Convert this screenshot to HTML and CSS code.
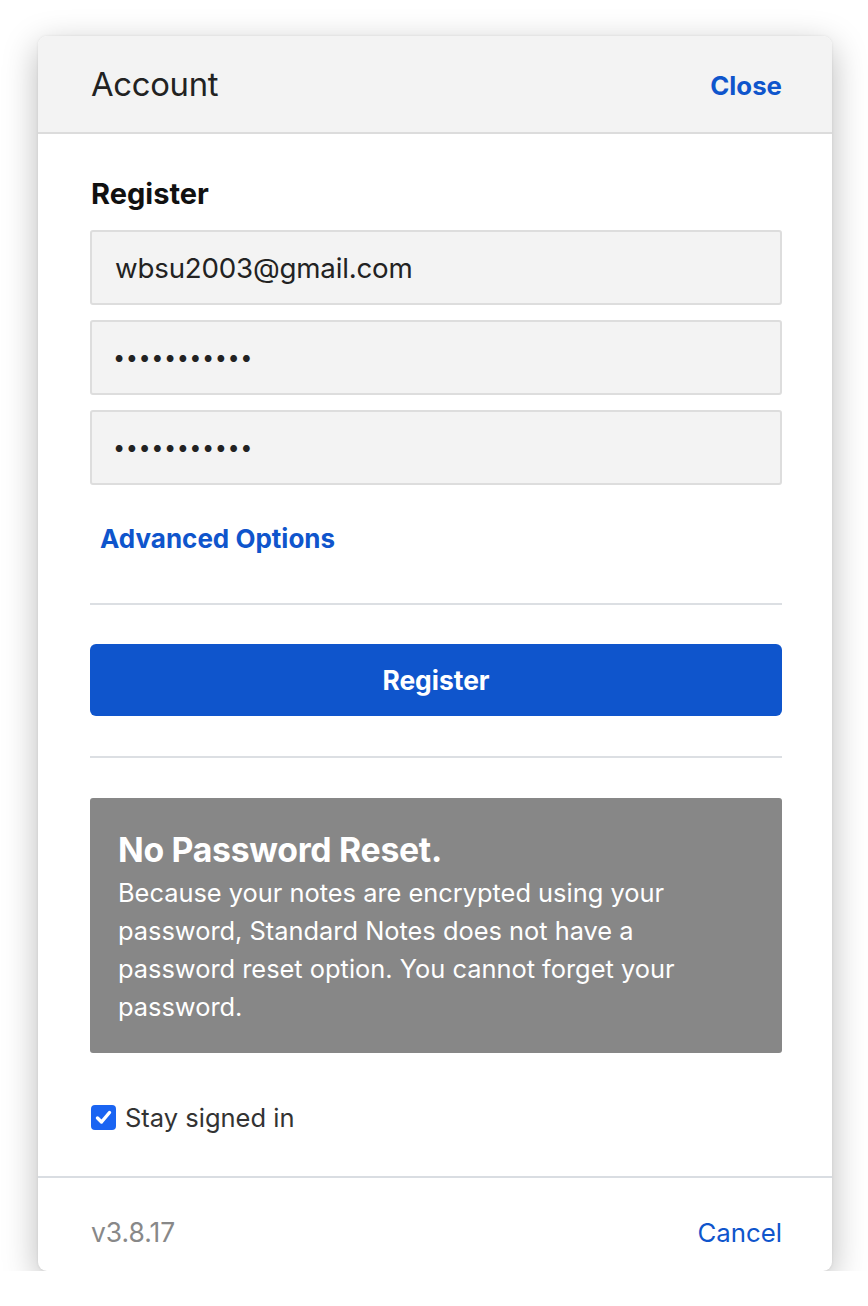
FILE: index.html
```html
<!DOCTYPE html>
<html>
<head>
<meta charset="utf-8">
<link rel="stylesheet" href="styles.css">
</head>
<body>
<div class="card">
  <div class="header">
    <div class="header-title">Account</div>
    <a class="header-close">Close</a>
  </div>
  <div class="content">
    <div class="section-title">Register</div>
    <div class="field">wbsu2003@gmail.com</div>
    <div class="field field-pw">●●●●●●●●●●●</div>
    <div class="field field-pw">●●●●●●●●●●●</div>
    <a class="advanced">Advanced Options</a>
    <div class="rule rule-first"></div>
    <div class="button">Register</div>
    <div class="rule"></div>
    <div class="notice">
      <div class="notice-title">No Password Reset.</div>
      <div class="notice-body">Because your notes are encrypted using your password, Standard Notes does not have a password reset option. You cannot forget your password.</div>
    </div>
    <label class="check-row">
      <span class="check"><svg width="19" height="19" viewBox="0 0 19 19"><path d="M3.5 10 L7.5 14 L15.5 4.5" fill="none" stroke="#fff" stroke-width="3.4" stroke-linecap="round" stroke-linejoin="round"/></svg></span>
      <span class="check-label">Stay signed in</span>
    </label>
  </div>
  <div class="footer">
    <span class="version">v3.8.17</span>
    <a class="cancel">Cancel</a>
  </div>
</div>
</body>
</html>
```
FILE: styles.css
```css
html, body {
  margin: 0;
  padding: 0;
  background: #ffffff;
}
body {
  font-family: Inter, "Noto Sans", sans-serif;
  color: #222;
  padding-top: 36px;
  padding-left: 38px;
}
.card {
  width: 794px;
  background: #fff;
  border-radius: 9px;
  box-shadow: 0 10px 35px rgba(0,0,0,0.28), 0 0 3px rgba(0,0,0,0.08);
  overflow: hidden;
}
.header {
  height: 96px;
  background: #f3f3f3;
  border-bottom: 2px solid #dcdcdc;
  display: flex;
  align-items: center;
  justify-content: space-between;
  padding: 0 50px 0 53px;
}
.header-title {
  font-size: 32.8px;
  color: #222;
  letter-spacing: -0.3px;
}
.header-close {
  font-size: 25.8px;
  font-weight: 700;
  color: #0f55cc;
  margin-top: 2px;
}
.content {
  padding: 44px 50px 43px 52px;
  border-bottom: 2px solid #d9dde2;
  display: flex;
  flex-direction: column;
}
.section-title {
  font-size: 29px;
  font-weight: 700;
  line-height: 32px;
  color: #111;
  margin-left: 1px;
}
.field {
  margin-top: 15px;
  height: 71px;
  background: #f3f3f3;
  border: 2px solid #dddddd;
  border-radius: 3px;
  display: flex;
  align-items: center;
  padding-left: 23px;
  font-size: 27.7px;
  color: #222;
  letter-spacing: -0.2px;
}
.section-title + .field {
  margin-top: 20px;
}
.field-pw {
  font-size: 9px;
  letter-spacing: 4.5px;
  padding-top: 2px;
  height: 69px;
}
.advanced {
  margin-top: 38px;
  margin-left: 10px;
  font-size: 26px;
  line-height: 32px;
  font-weight: 700;
  color: #0f55cc;
}
.rule {
  height: 2px;
  background: #dcdfe3;
  margin-top: 40px;
}
.rule-first {
  margin-top: 48px;
}
.button {
  margin-top: 39px;
  height: 72px;
  background: #0f55cc;
  border-radius: 6px;
  color: #fff;
  font-size: 26.4px;
  font-weight: 700;
  display: flex;
  align-items: center;
  justify-content: center;
}
.notice {
  margin-top: 40px;
  background: #878787;
  border-radius: 3px;
  color: #fff;
  padding: 32px 30px 27px 28px;
}
.notice-title {
  font-size: 33.8px;
  font-weight: 700;
  line-height: 40px;
  letter-spacing: -0.3px;
}
.notice-body {
  margin-top: 4px;
  font-size: 25.4px;
  line-height: 38px;
}
.check-row {
  margin-top: 48px;
  display: flex;
  align-items: center;
  gap: 9px;
  height: 32px;
}
.check {
  width: 25px;
  height: 25px;
  border-radius: 4px;
  background: #1a64f2;
  display: flex;
  align-items: center;
  justify-content: center;
  margin-left: 1px;
}
.check-label {
  font-size: 25.5px;
  color: #333;
}
.footer {
  height: 93px;
  display: flex;
  align-items: center;
  justify-content: space-between;
  padding: 15px 50px 0 53px;
  box-sizing: border-box;
}
.version {
  font-size: 26.4px;
  color: #888;
}
.cancel {
  font-size: 25.8px;
  color: #0f55cc;
}
```
